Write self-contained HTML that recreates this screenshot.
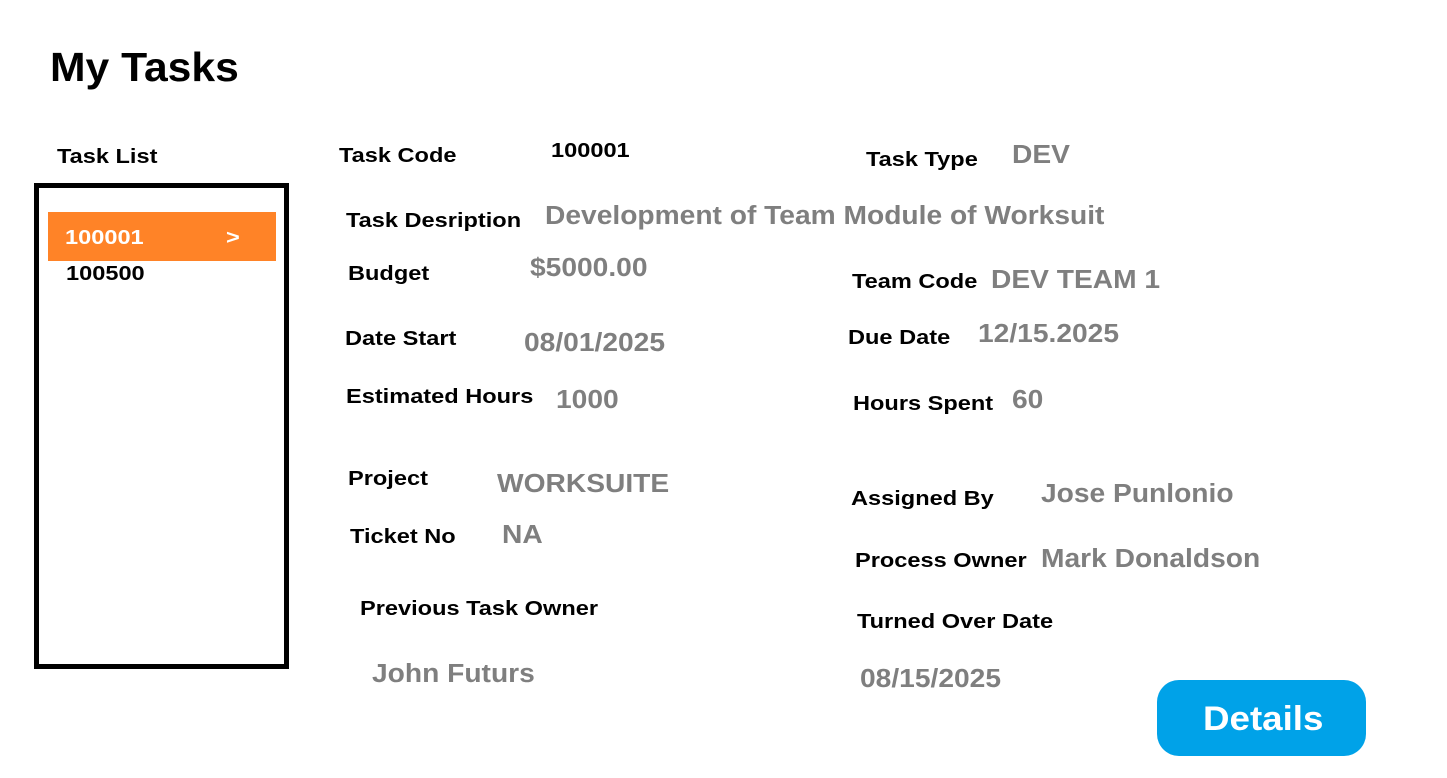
<!DOCTYPE html>
<html><head><meta charset="utf-8"><style>
body{margin:0;width:1447px;height:778px;background:#fff;position:relative;overflow:hidden;font-family:"Liberation Sans",Arial,sans-serif;font-weight:bold}
div{position:absolute;line-height:1;white-space:nowrap;transform-origin:0 50%}
.l{font-size:20.5px;color:#000;transform:scaleX(1.15);margin-top:1px}
.v{font-size:25.5px;color:#7f7f7f;transform:scaleX(1.105);margin-top:1px}
</style></head><body>
<div style="left:50px;top:47px;font-size:41px;transform:scaleX(1.04)">My Tasks</div>
<div class="l" style="left:57px;top:146px">Task List</div>
<div style="left:34px;top:183px;width:245px;height:476px;border:5px solid #000"></div>
<div style="left:48px;top:212px;width:228px;height:49px;background:#ff8327"></div>
<div class="l" style="left:65px;top:227px;color:#fff">100001</div>
<div class="l" style="left:226px;top:227px;color:#fff">&gt;</div>
<div class="l" style="left:66px;top:263px">100500</div>

<div class="l" style="left:339px;top:145px">Task Code</div>
<div class="l" style="left:551px;top:140px">100001</div>
<div class="l" style="left:866px;top:149px">Task Type</div>
<div class="v" style="left:1012px;top:142px">DEV</div>
<div class="l" style="left:346px;top:210px">Task Desription</div>
<div class="v" style="left:545px;top:203px">Development of Team Module of Worksuit</div>
<div class="l" style="left:348px;top:263px">Budget</div>
<div class="v" style="left:530px;top:255px">$5000.00</div>
<div class="l" style="left:852px;top:271px">Team Code</div>
<div class="v" style="left:991px;top:267px">DEV TEAM 1</div>
<div class="l" style="left:345px;top:328px">Date Start</div>
<div class="v" style="left:524px;top:330px">08/01/2025</div>
<div class="l" style="left:848px;top:327px">Due Date</div>
<div class="v" style="left:978px;top:321px">12/15.2025</div>
<div class="l" style="left:346px;top:386px">Estimated Hours</div>
<div class="v" style="left:556px;top:387px">1000</div>
<div class="l" style="left:853px;top:393px">Hours Spent</div>
<div class="v" style="left:1012px;top:387px">60</div>
<div class="l" style="left:348px;top:468px">Project</div>
<div class="v" style="left:497px;top:471px">WORKSUITE</div>
<div class="l" style="left:851px;top:488px">Assigned By</div>
<div class="v" style="left:1041px;top:481px">Jose Punlonio</div>
<div class="l" style="left:350px;top:526px">Ticket No</div>
<div class="v" style="left:502px;top:522px">NA</div>
<div class="l" style="left:855px;top:550px">Process Owner</div>
<div class="v" style="left:1041px;top:546px">Mark Donaldson</div>
<div class="l" style="left:360px;top:598px">Previous Task Owner</div>
<div class="l" style="left:857px;top:611px">Turned Over Date</div>
<div class="v" style="left:372px;top:661px">John Futurs</div>
<div class="v" style="left:860px;top:666px">08/15/2025</div>

<div style="left:1157px;top:680px;width:209px;height:76px;background:#00a2e8;border-radius:22px"></div>
<div style="left:1203px;top:702px;font-size:34px;color:#fff;transform:scaleX(1.08)">Details</div>
</body></html>
